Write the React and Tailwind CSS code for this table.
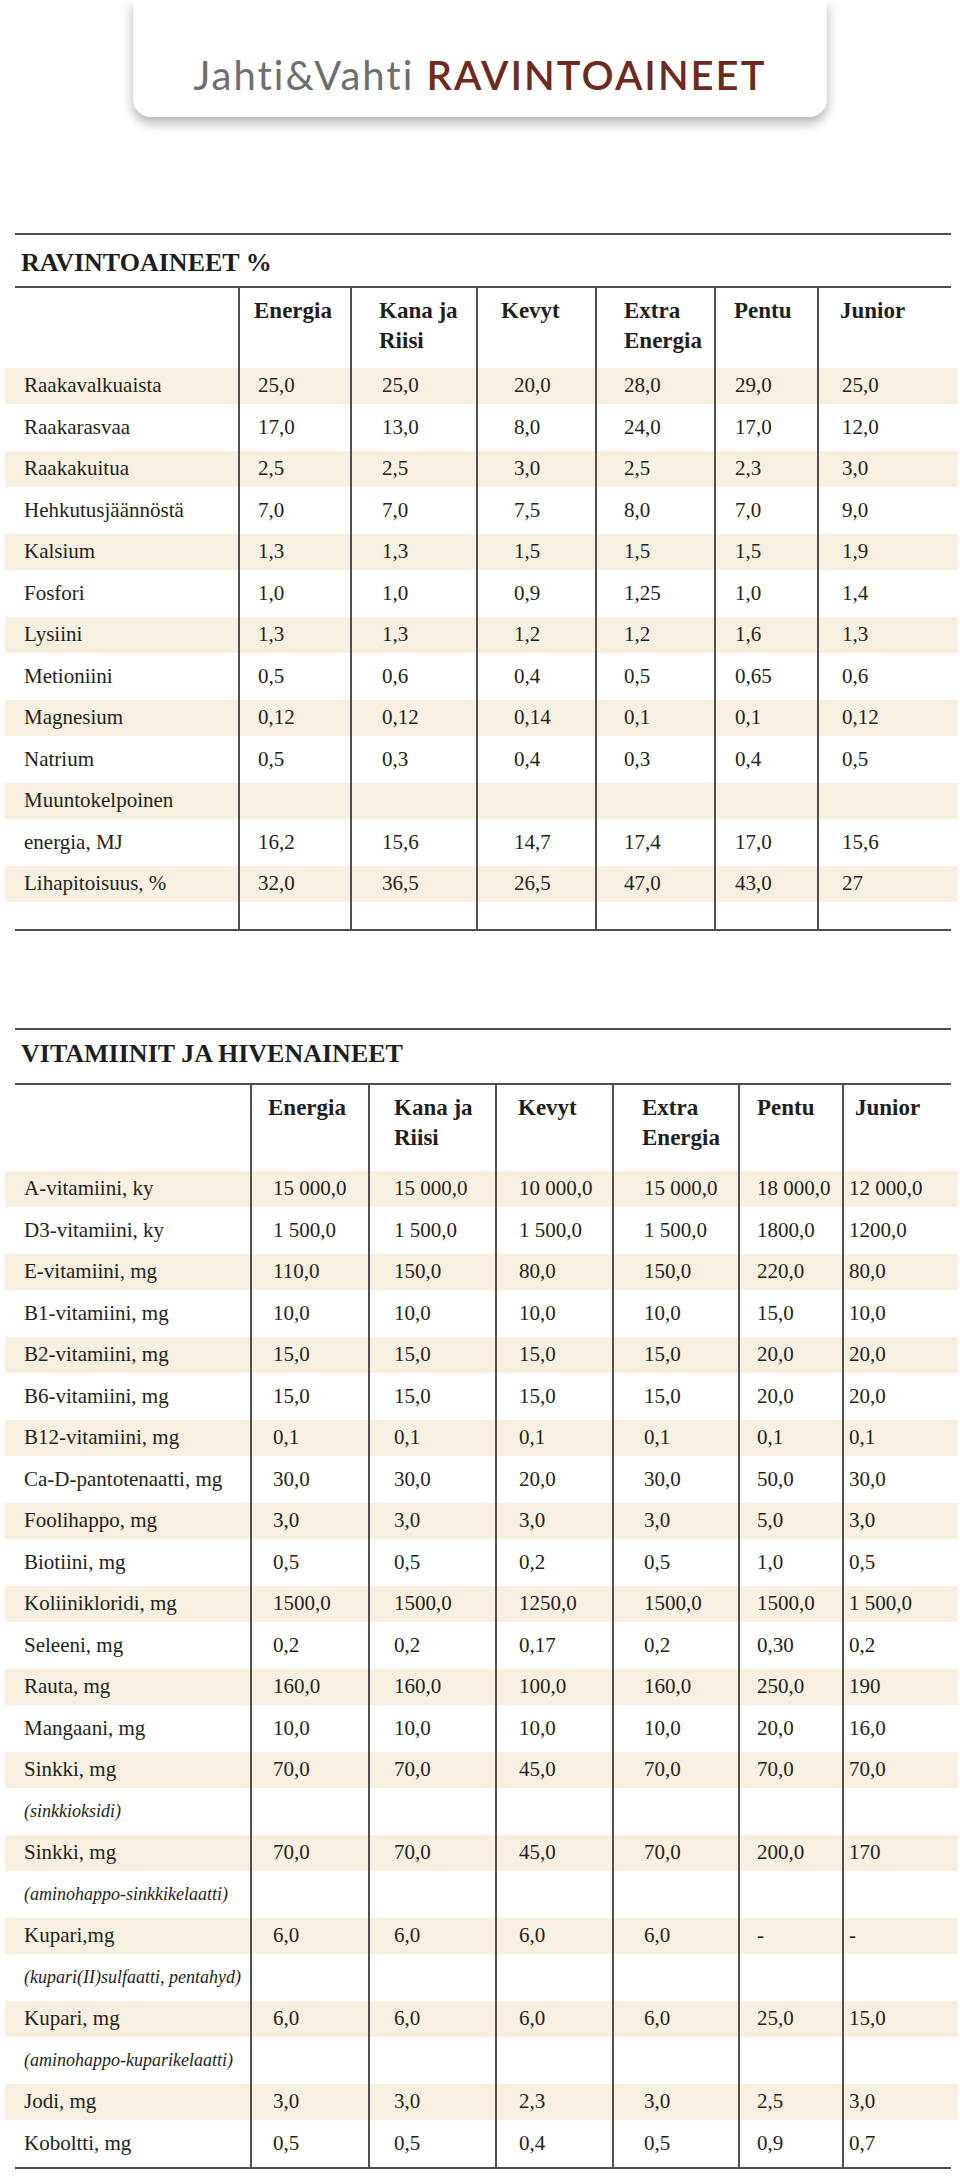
const serif = { fontFamily: '"Liberation Serif", "Times New Roman", serif' };

const nutrients = [
  ["Raakavalkuaista", "25,0", "25,0", "20,0", "28,0", "29,0", "25,0"],
  ["Raakarasvaa", "17,0", "13,0", "8,0", "24,0", "17,0", "12,0"],
  ["Raakakuitua", "2,5", "2,5", "3,0", "2,5", "2,3", "3,0"],
  ["Hehkutusjäännöstä", "7,0", "7,0", "7,5", "8,0", "7,0", "9,0"],
  ["Kalsium", "1,3", "1,3", "1,5", "1,5", "1,5", "1,9"],
  ["Fosfori", "1,0", "1,0", "0,9", "1,25", "1,0", "1,4"],
  ["Lysiini", "1,3", "1,3", "1,2", "1,2", "1,6", "1,3"],
  ["Metioniini", "0,5", "0,6", "0,4", "0,5", "0,65", "0,6"],
  ["Magnesium", "0,12", "0,12", "0,14", "0,1", "0,1", "0,12"],
  ["Natrium", "0,5", "0,3", "0,4", "0,3", "0,4", "0,5"],
  ["Muuntokelpoinen"],
  ["energia, MJ", "16,2", "15,6", "14,7", "17,4", "17,0", "15,6"],
  ["Lihapitoisuus, %", "32,0", "36,5", "26,5", "47,0", "43,0", "27"],
];

const vitamins = [
  ["A-vitamiini, ky", "15 000,0", "15 000,0", "10 000,0", "15 000,0", "18 000,0", "12 000,0"],
  ["D3-vitamiini, ky", "1 500,0", "1 500,0", "1 500,0", "1 500,0", "1800,0", "1200,0"],
  ["E-vitamiini, mg", "110,0", "150,0", "80,0", "150,0", "220,0", "80,0"],
  ["B1-vitamiini, mg", "10,0", "10,0", "10,0", "10,0", "15,0", "10,0"],
  ["B2-vitamiini, mg", "15,0", "15,0", "15,0", "15,0", "20,0", "20,0"],
  ["B6-vitamiini, mg", "15,0", "15,0", "15,0", "15,0", "20,0", "20,0"],
  ["B12-vitamiini, mg", "0,1", "0,1", "0,1", "0,1", "0,1", "0,1"],
  ["Ca-D-pantotenaatti, mg", "30,0", "30,0", "20,0", "30,0", "50,0", "30,0"],
  ["Foolihappo, mg", "3,0", "3,0", "3,0", "3,0", "5,0", "3,0"],
  ["Biotiini, mg", "0,5", "0,5", "0,2", "0,5", "1,0", "0,5"],
  ["Koliinikloridi, mg", "1500,0", "1500,0", "1250,0", "1500,0", "1500,0", "1 500,0"],
  ["Seleeni, mg", "0,2", "0,2", "0,17", "0,2", "0,30", "0,2"],
  ["Rauta, mg", "160,0", "160,0", "100,0", "160,0", "250,0", "190"],
  ["Mangaani, mg", "10,0", "10,0", "10,0", "10,0", "20,0", "16,0"],
  ["Sinkki, mg", "70,0", "70,0", "45,0", "70,0", "70,0", "70,0"],
  ["(sinkkioksidi)", null],
  ["Sinkki, mg", "70,0", "70,0", "45,0", "70,0", "200,0", "170"],
  ["(aminohappo-sinkkikelaatti)", null],
  ["Kupari,mg", "6,0", "6,0", "6,0", "6,0", "-", "-"],
  ["(kupari(II)sulfaatti, pentahyd)", null],
  ["Kupari, mg", "6,0", "6,0", "6,0", "6,0", "25,0", "15,0"],
  ["(aminohappo-kuparikelaatti)", null],
  ["Jodi, mg", "3,0", "3,0", "2,3", "3,0", "2,5", "3,0"],
  ["Koboltti, mg", "0,5", "0,5", "0,4", "0,5", "0,9", "0,7"],
];

const headers = [["Energia"], ["Kana ja", "Riisi"], ["Kevyt"], ["Extra", "Energia"], ["Pentu"], ["Junior"]];

const Rule = () => <div className="ml-[15px] w-[936px] h-[2px] bg-[#4f4f4f]" />;

const DataTable = ({ title, rows, cols, headPad, dataPad, headHeight, titleClass, filler }) => (
  <section>
    <Rule />
    <h2 className={`ml-[21px] text-[26px] leading-[30px] font-bold text-[#1e1e1e] ${titleClass}`}>{title}</h2>
    <Rule />

    <div className="ml-[5px] w-[953px] grid" style={{ gridTemplateColumns: cols }}>
      <div style={{ height: headHeight }} />
      {headers.map((h, i) => (
        <div key={i} className="border-l-2 border-[#4f4f4f] pt-[8px] text-[23px] leading-[30px] font-bold text-[#1e1e1e]" style={{ paddingLeft: headPad[i] }}>
          {h.map((line) => (
            <div key={line}>{line}</div>
          ))}
        </div>
      ))}
    </div>

    {rows.map((row, r) => {
      const band = r % 2 === 0;
      const note = row[1] === null;
      return (
        <div
          key={r}
          className={`ml-[5px] w-[953px] grid ${band ? "h-[36px] bg-[#f7efdf]" : "h-[47px]"}`}
          style={{ gridTemplateColumns: cols }}
        >
          <div className={`pl-[19px] flex items-center text-[#231f20] whitespace-nowrap ${note ? "italic text-[18px]" : "text-[21px]"}`}>{row[0]}</div>
          {[0, 1, 2, 3, 4, 5].map((c) => (
            <div key={c} className="border-l-2 border-[#4f4f4f] flex items-center text-[21px] text-[#231f20] whitespace-nowrap" style={{ paddingLeft: dataPad[c] }}>
              {note ? "" : row[c + 1] || ""}
            </div>
          ))}
        </div>
      );
    })}

    {filler && (
      <div className="ml-[5px] w-[953px] grid" style={{ gridTemplateColumns: cols, height: filler }}>
        <div />
        {[0, 1, 2, 3, 4, 5].map((c) => (
          <div key={c} className="border-l-2 border-[#4f4f4f]" />
        ))}
      </div>
    )}
    <Rule />
  </section>
);

export default function App() {
  return (
    <div className="w-[960px] h-[2178px] bg-white overflow-hidden" style={serif}>
      <header className="ml-[133px] w-[694px] h-[117px] bg-white rounded-b-[18px] shadow-[0_6px_12px_rgba(0,0,0,0.3)] pt-[53px] text-center">
        <h1 className="text-[40px] leading-[44px] tracking-[2px] whitespace-nowrap" style={{ fontFamily: 'Lato, "Open Sans", sans-serif' }}>
          <span className="text-[#6e6e6e]">Jahti&amp;Vahti</span>{" "}
          <span className="text-[#6b2b1f] font-semibold">RAVINTOAINEET</span>
        </h1>
      </header>

      <div className="mt-[116px]">
        <DataTable
          title="RAVINTOAINEET %"
          rows={nutrients}
          cols="233px 112px 126px 119px 119px 103px 1fr"
          headPad={[14, 27, 23, 27, 18, 21]}
          dataPad={[18, 30, 36, 27, 19, 23]}
          headHeight={80}
          titleClass="pt-[13px] pb-[8px]"
          filler={27}
        />
      </div>

      <div className="mt-[97px]">
        <DataTable
          title="VITAMIINIT JA HIVENAINEET"
          rows={vitamins}
          cols="245px 118px 127px 117px 126px 104px 1fr"
          headPad={[16, 24, 21, 28, 17, 11]}
          dataPad={[21, 24, 22, 30, 17, 5]}
          headHeight={86}
          titleClass="pt-[9px] pb-[14px]"
        />
      </div>
    </div>
  );
}
